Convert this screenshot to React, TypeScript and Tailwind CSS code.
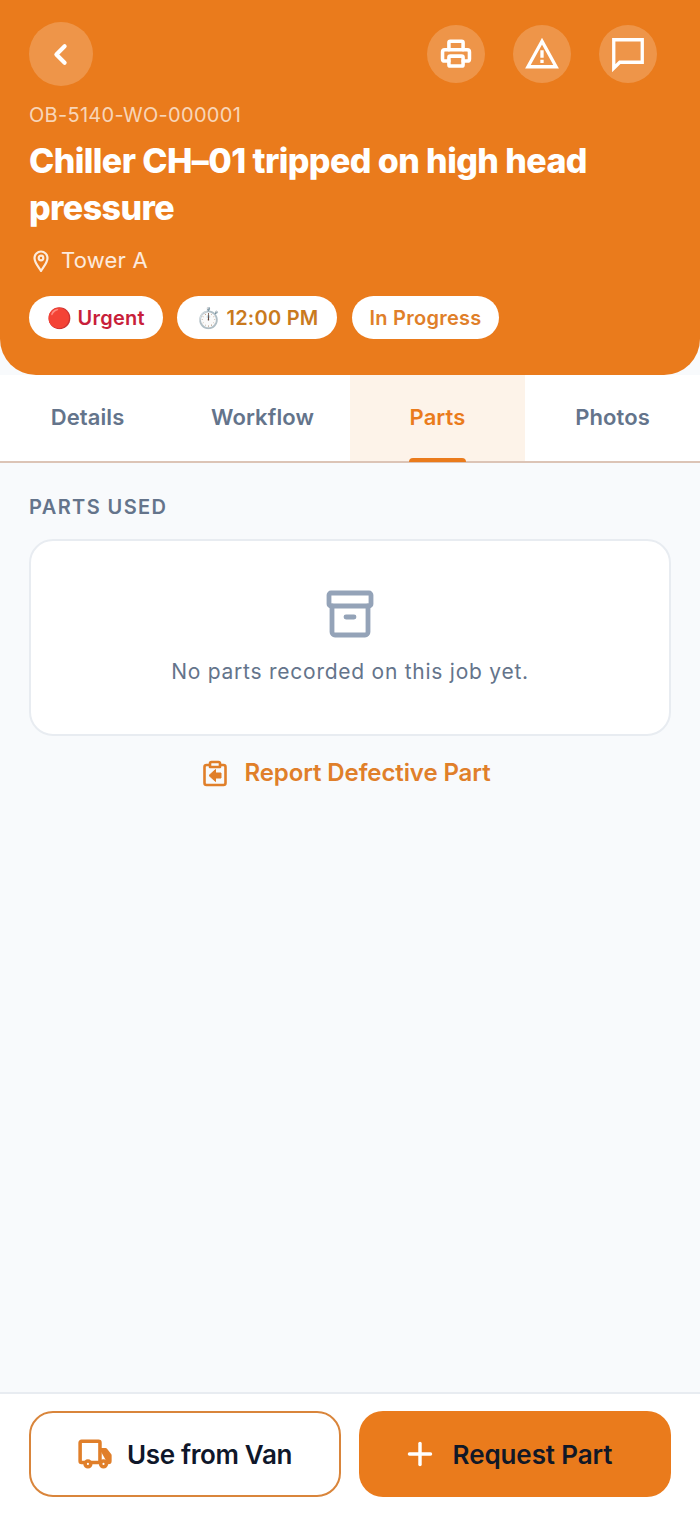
import { ChevronLeft, Plus } from "lucide-react"

const tabs = ["Details", "Workflow", "Parts", "Photos"]

function RoundBtn({ children }: { children: React.ReactNode }) {
  return <button className="w-[58px] h-[58px] rounded-full bg-white/20 flex items-center justify-center text-white">{children}</button>
}

export default function App() {
  return (
    <div className="h-screen w-full flex flex-col bg-[#f8fafc] font-['Inter',sans-serif]">
      <header className="bg-[#ea7b1c] rounded-b-[36px] h-[375px] shrink-0 pl-[29px] pr-[43px] pt-[22px]">
        <div className="flex items-center justify-between h-[64px]">
          <button className="w-[64px] h-[64px] rounded-full bg-white/20 flex items-center justify-center text-white">
            <ChevronLeft size={33} strokeWidth={3} className="-ml-[1px]" />
          </button>
          <div className="flex gap-[28px]">
            <RoundBtn>
              <svg width="34" height="34" viewBox="0 0 24 24" fill="none" stroke="currentColor" strokeWidth="2.5" strokeLinejoin="round" strokeLinecap="round">
                <path d="M7 9V4a1 1 0 0 1 1-1h8a1 1 0 0 1 1 1v5" />
                <path d="M7 17H4a1.5 1.5 0 0 1-1.5-1.5v-5A1.5 1.5 0 0 1 4 9h16a1.5 1.5 0 0 1 1.5 1.5v5A1.5 1.5 0 0 1 20 17h-3" />
                <rect x="7" y="13.5" width="10" height="7" rx="1" />
              </svg>
            </RoundBtn>
            <RoundBtn>
              <svg width="36" height="36" viewBox="0 0 24 24" fill="none" stroke="currentColor" strokeWidth="2.2" strokeLinejoin="miter">
                <path d="M12 3.5 2.6 20.5h18.8z" />
                <path d="M12 9.5v5M12 15.8v2.2" />
              </svg>
            </RoundBtn>
            <RoundBtn>
              <svg width="36" height="36" viewBox="0 0 24 24" fill="none" stroke="currentColor" strokeWidth="2.2" strokeLinejoin="miter">
                <path d="M2.5 21.5V2.5h19v15H6.5z" />
              </svg>
            </RoundBtn>
          </div>
        </div>
        <div className="mt-[17px] text-[20px] leading-[24px] tracking-[0.3px] text-white/70">OB-5140-WO-000001</div>
        <h1 className="mt-[10px] text-[34px] leading-[47px] font-extrabold text-white tracking-[-0.58px] max-w-[600px]">Chiller CH–01 tripped on high head pressure</h1>
        <div className="mt-[14px] flex items-center gap-[11px] text-[22px] leading-[30px] tracking-[0.2px] text-white/85">
          <svg width="24" height="24" viewBox="0 0 24 24" fill="none" stroke="currentColor" strokeWidth="2.2" strokeLinejoin="round">
            <path d="M12 23c-1.5-3-6.5-8-6.5-13a6.5 6.5 0 0 1 13 0c0 5-5 10-6.5 13z" />
            <circle cx="12" cy="10" r="2.3" />
          </svg>
          <span className="-ml-[3px]">Tower A</span>
        </div>
        <div className="mt-[21px] flex gap-[14.5px] text-[20px] font-semibold leading-[45px] tracking-[0.25px]">
          <span className="h-[43px] rounded-full bg-white px-[18px] text-[#c81e3a]">🔴 Urgent</span>
          <span className="h-[43px] rounded-full bg-white px-[18.5px] text-[#c97a1e]">⏱️ 12:00 PM</span>
          <span className="h-[43px] rounded-full bg-white px-[18px] text-[#e07f2a]">In Progress</span>
        </div>
      </header>

      <nav className="grid grid-cols-4 h-[88px] shrink-0 bg-white border-b-2 border-[#dcc4b6]">
        {tabs.map((t) => (
          <div key={t} className={t === "Parts" ? "relative flex items-center justify-center pb-[2px] text-[22px] tracking-[0.1px] font-semibold bg-[#fdf3e9] text-[#ea7b1c]" : "flex items-center justify-center pb-[2px] text-[22px] tracking-[0.1px] font-semibold text-[#64748b]"}>
            {t}
            {t === "Parts" && <span className="absolute -bottom-[1px] left-[59px] w-[57px] h-[4px] rounded-t-[4px] bg-[#ea7b1c]" />}
          </div>
        ))}
      </nav>

      <main className="flex-1 px-[29px] pt-[31px]">
        <h2 className="text-[20px] leading-[26px] font-semibold tracking-[1.4px] text-[#64748b]">PARTS USED</h2>
        <div className="mt-[19px] h-[197px] rounded-[24px] border-2 border-[#e8ecf1] bg-white flex flex-col items-center pt-[47px]">
          <svg width="48" height="50" viewBox="0 0 24 25" fill="none" stroke="#94a3b8" strokeWidth="2.4" strokeLinejoin="round" strokeLinecap="round">
            <rect x="1.5" y="2.5" width="21" height="6.5" rx="1" />
            <path d="M3 9v13a1.5 1.5 0 0 0 1.5 1.5h15A1.5 1.5 0 0 0 21 22V9" />
            <path d="M10 14.5h4" />
          </svg>
          <p className="mt-[19px] text-[21px] leading-[30px] tracking-[0.75px] text-[#64748b]">No parts recorded on this job yet.</p>
        </div>
        <button className="mt-[19px] w-full flex items-center justify-center gap-[17px] pr-[6px] text-[#e07f2a] text-[24px] leading-[36px] font-semibold tracking-[-0.1px]">
          <svg width="24" height="27" viewBox="0 0 24 27" fill="none" stroke="currentColor" strokeWidth="2.6" strokeLinejoin="round">
            <path d="M7 5H3.5A2 2 0 0 0 1.5 7v16a2 2 0 0 0 2 2h17a2 2 0 0 0 2-2V7a2 2 0 0 0-2-2H17" />
            <path d="M7 7V3.5A1.5 1.5 0 0 1 8.5 2h7A1.5 1.5 0 0 1 17 3.5V7z" />
            <path d="M18 13h-5.5V9.5L6 15.5l6.5 6V18H18z" fill="currentColor" strokeWidth="1" />
          </svg>
          Report Defective Part
        </button>
      </main>

      <footer className="shrink-0 h-[123px] bg-white border-t-2 border-[#e8ecf1] px-[29px] pt-[17px] grid grid-cols-2 gap-[18px]">
        <button className="h-[86px] rounded-[24px] border-2 border-[#d9853b] bg-white flex items-center justify-center gap-[15px] text-[26px] tracking-[-0.35px] font-semibold text-[#0f172a]">
          <svg width="34" height="34" viewBox="0 0 24 24" fill="none" stroke="#e07f2a" strokeWidth="2.5" strokeLinejoin="round">
            <path d="M5 18H2.5a1 1 0 0 1-1-1V4a1 1 0 0 1 1-1h12a1 1 0 0 1 1 1v14H9" />
            <path d="M15.5 9h4l3 4v4a1 1 0 0 1-1 1h-1" fill="#e07f2a" />
            <circle cx="7" cy="19" r="2" />
            <circle cx="18" cy="19" r="2" />
          </svg>
          Use from Van
        </button>
        <button className="h-[86px] rounded-[24px] bg-[#ea7b1c] flex items-center justify-center gap-[15px] pr-[16px] text-[26px] tracking-[-0.1px] font-semibold text-[#111827]">
          <Plus size={36} strokeWidth={2.3} color="white" />
          Request Part
        </button>
      </footer>
    </div>
  )
}
